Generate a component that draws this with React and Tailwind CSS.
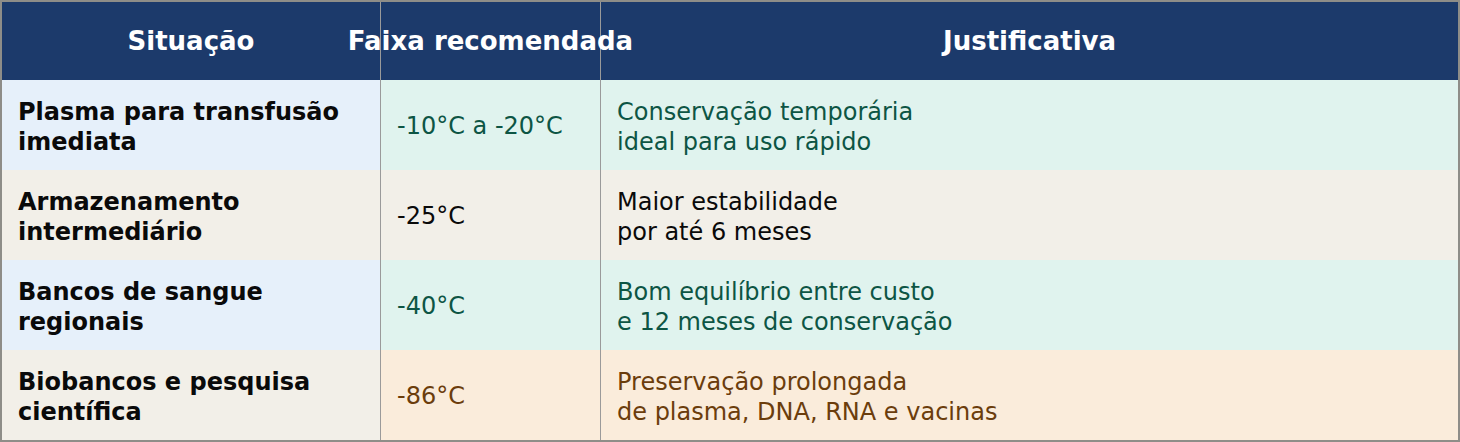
const rows = [
  {
    situacao: "Plasma para transfusão imediata",
    faixa: "-10°C a -20°C",
    just: ["Conservação temporária", "ideal para uso rápido"],
    left: "bg-[#e6f0fa]",
    right: "bg-[#e0f3ee]",
    text: "text-[#0d5544]",
  },
  {
    situacao: "Armazenamento intermediário",
    faixa: "-25°C",
    just: ["Maior estabilidade", "por até 6 meses"],
    left: "bg-[#f2efe8]",
    right: "bg-[#f2efe8]",
    text: "text-[#0a0a0a]",
  },
  {
    situacao: "Bancos de sangue regionais",
    faixa: "-40°C",
    just: ["Bom equilíbrio entre custo", "e 12 meses de conservação"],
    left: "bg-[#e6f0fa]",
    right: "bg-[#e0f3ee]",
    text: "text-[#0d5544]",
  },
  {
    situacao: "Biobancos e pesquisa científica",
    faixa: "-86°C",
    just: ["Preservação prolongada", "de plasma, DNA, RNA e vacinas"],
    left: "bg-[#f2efe8]",
    right: "bg-[#faecdb]",
    text: "text-[#6b3d0c]",
  },
];

export default function App() {
  return (
    <div className="w-[1460px] h-[442px] border-2 border-[#8e8d88] font-['DejaVu_Sans',sans-serif] text-[24px] leading-[30px] overflow-hidden">
      {/* Header */}
      <div className="flex h-[78px] bg-[#1c3a6b] text-white font-bold text-[26px]">
        <div className="w-[379px] border-r border-[#9a9a9a] flex items-center justify-center">
          Situação
        </div>
        <div className="w-[220px] border-r border-[#9a9a9a] flex items-center justify-center whitespace-nowrap overflow-visible">
          <span className="shrink-0">Faixa recomendada</span>
        </div>
        <div className="flex-1 flex items-center justify-center">Justificativa</div>
      </div>

      {rows.map((r) => (
        <div key={r.faixa} className="flex h-[90px]">
          <div
            className={`w-[379px] border-r border-[#9a9a9a] px-4 pt-[4px] flex items-center font-bold text-[#0a0a0a] ${r.left}`}
          >
            {r.situacao}
          </div>
          <div
            className={`w-[220px] border-r border-[#9a9a9a] px-4 pt-[2px] flex items-center ${r.right} ${r.text}`}
          >
            {r.faixa}
          </div>
          <div className={`flex-1 px-4 pt-[4px] flex flex-col justify-center ${r.right} ${r.text}`}>
            <span>{r.just[0]}</span>
            <span>{r.just[1]}</span>
          </div>
        </div>
      ))}
    </div>
  );
}
